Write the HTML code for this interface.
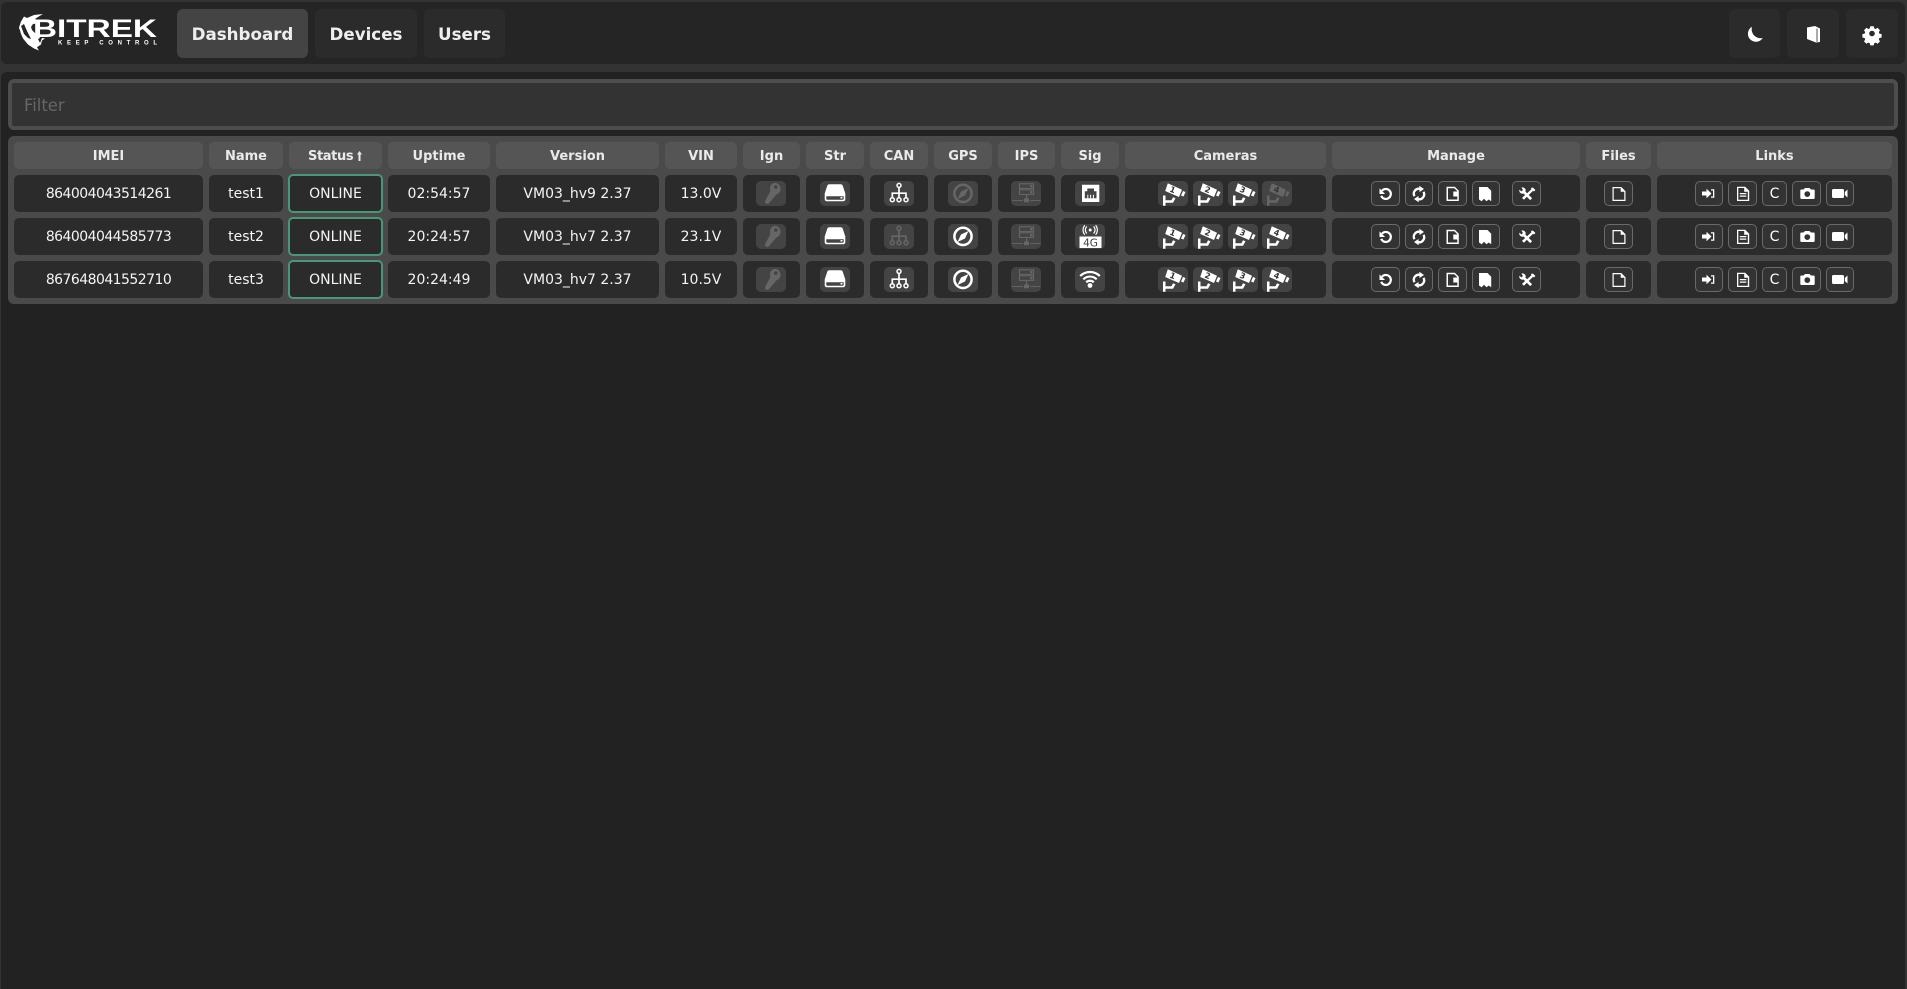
<!DOCTYPE html>
<html lang="en"><head><meta charset="utf-8"><title>Bitrek Dashboard</title>
<style>
*{box-sizing:border-box}
html,body{margin:0;padding:0;width:1907px;height:989px;overflow:hidden;background:#333;font-family:"DejaVu Sans","Liberation Sans",sans-serif;color:#eee}
#nav{position:absolute;left:1px;top:2px;width:1904px;height:62px;background:#252525;border-radius:6px}
#main{position:absolute;left:1px;top:72px;width:1904px;height:917px;background:#222;border-radius:6px 6px 0 0}
.n{position:absolute;top:9px;height:49px;background:#2b2b2b;border-radius:6px;font-weight:700;font-size:16.7px;line-height:50px;text-align:center;color:#eee}
.n.a{background:#444}
.n svg{position:absolute;left:0;top:0}
#filter{position:absolute;left:8px;top:79px;width:1890px;height:51px;border:4px solid #4d4d4d;border-radius:6px;background:#333;color:#666;font-size:16.4px;line-height:45px;padding-left:12px}
#tb{position:absolute;left:8px;top:136px;width:1890px;height:168px;background:#4a4a4a;border-radius:6px}
.row{position:absolute;left:0;width:1907px}
.h{top:142px;height:27px}.r1{top:175px;height:37px}.r2{top:218px;height:37px}.r3{top:261px;height:37px}
.c{position:absolute;top:0;height:100%;background:#2b2b2b;border-radius:5px;text-align:center;font-size:14px;line-height:39px;color:#f4f4f4}
.h .c{background:#555;font-weight:700;font-size:13px;line-height:29px;color:#eaeaea}
.c1{left:14px;width:189px}.c2{left:209px;width:74px}.c3{left:289px;width:93px}.c4{left:388px;width:102px}
.c5{left:496px;width:163px}.c6{left:665px;width:72px}.c7{left:743px;width:57px}.c8{left:806px;width:58px}
.c9{left:870px;width:58px}.c10{left:934px;width:58px}.c11{left:998px;width:57px}.c12{left:1061px;width:58px}
.c13{left:1125px;width:201px}.c14{left:1332px;width:248px}.c15{left:1586px;width:65px}.c16{left:1657px;width:235px}
.r1 .c1,.r2 .c1,.r3 .c1{letter-spacing:-.55px}
.st{top:-1px!important;height:39px!important;border:2px solid #4a9678;line-height:37px!important}
.st.c3{left:288px;width:95px}
.h .c3{text-align:left;padding-left:19px;letter-spacing:-.4px}
.h .c3 svg{position:absolute;left:68px;top:9px}
.b,.o{position:absolute;top:6px;height:25px;width:30px;border-radius:5px;display:flex;align-items:center;justify-content:center;color:#fff}
.b{background:#444}
.o{background:#333;border:1px solid #6a6a6a;font-size:14px;line-height:23px}
.t{padding-top:2px}
.d{color:#666}
.b svg,.o svg{flex:none;width:30px;height:25px;display:block}
svg{fill:currentColor}
.cam{font:700 8px "DejaVu Sans",sans-serif;fill:#333;text-anchor:middle}
</style></head><body>
<svg width="0" height="0" style="position:absolute">
<defs>
<symbol id="key" viewBox="0 0 30 25"><path fill-rule="evenodd" d="M18.500 1.700a6 6 0 0 1 2 11.700l-7.300 8.500a2.300 2.300 0 0 1-4-2.200l5.300-9.700A6 6 0 0 1 18.500 1.700zm1.300 2.600a1.800 1.800 0 1 0 0 3.600 1.800 1.800 0 0 0 0-3.600z"/></symbol>
<symbol id="drv" viewBox="0 0 30 25"><path fill-rule="evenodd" d="M9.500 3.300h11c1.200 0 1.900.6 2.300 1.600L25.300 12.500V18c0 1.400-.8 2.300-2.200 2.300H6.900C5.500 20.300 4.700 19.400 4.700 18v-5.500L7.200 4.900C7.600 3.900 8.300 3.300 9.500 3.300zM6.300 15.200v2.600c0 .6.300.9.900.9h15.600c.6 0 .9-.3.900-.9v-2.600zM20.500 16h2v1.500h-2z"/></symbol>
<symbol id="can" viewBox="0 0 30 25"><g fill="none" stroke="currentColor" stroke-width="1.500"><circle cx="15" cy="4.400" r="2"/><circle cx="8.300" cy="18.700" r="2"/><circle cx="15" cy="18.700" r="2"/><circle cx="22" cy="18.700" r="2"/><path stroke-width="1.700" d="M15 6.400V16.700M8.300 16.700V12.200H22V16.700"/></g></symbol>
<symbol id="gps" viewBox="0 0 30 25"><circle cx="15" cy="12.400" r="8.600" fill="none" stroke="currentColor" stroke-width="2.500"/><path d="M20.500 7 17 14.500 9.500 18 13 10.500z"/></symbol>
<symbol id="ips" viewBox="0 0 30 25"><g fill="none" stroke="currentColor" stroke-width="1.100"><rect x="8.500" y="2.800" width="14" height="4.600"/><rect x="8.500" y="8.800" width="14" height="4.600"/></g><path d="M19 4h2.400v2.200H19zM19 10h2.400v2.200H19zM15 14h1.200v3.500H18v3.800h-5v-3.800h2zM1 19h11v.9H1zM19 19h10.500v.9H19z"/></symbol>
<symbol id="eth" viewBox="0 0 30 25"><path fill-rule="evenodd" d="M7 3.700h17.300V21H7zM12.300 7.500v2.700H9.800v7h11.700v-7H19V7.500z"/><path d="M12.300 13.700h1v3.500h-1zM15.100 13.700h1v3.500h-1zM17.900 13.700h1v3.500h-1z"/></symbol>
<symbol id="lte" viewBox="0 0 30 25"><circle cx="15.200" cy="6" r="1.500"/><path fill="none" stroke="currentColor" stroke-width="1.200" d="M11.800 2.500a5 5 0 0 0 0 7M18.600 2.500a5 5 0 0 1 0 7M9.800 1.200a7.500 7.500 0 0 0 0 9.600M20.600 1.200a7.500 7.500 0 0 1 0 9.600"/><path d="M4.500 12.500h22v11.500h-22z"/><text x="15.500" y="22.500" text-anchor="middle" style="font:400 10.500px 'DejaVu Sans',sans-serif;fill:#444">4G</text></symbol>
<symbol id="wifi" viewBox="0 0 30 25"><circle cx="15" cy="18.500" r="2.400"/><path fill="none" stroke="currentColor" stroke-width="2.200" d="M5.200 9a14 14 0 0 1 19.600 0M8.300 12.300a9.600 9.600 0 0 1 13.400 0M11.200 15.300a5.500 5.500 0 0 1 7.600 0"/></symbol>
<symbol id="cam0" viewBox="0 0 30 25"><path d="M9.800 2.300 24 8.700 21 16 7.200 10zM25 10l2.500 1-2 4.500-2.500-1zM5 14.500h2.500v4.700h6l1.500-3 2.500 1-2.500 4.500H7.500v3H5z"/></symbol>
<symbol id="undo" viewBox="0 0 30 25"><path fill="none" stroke="currentColor" stroke-width="2.200" d="M11 9.700A5 5 0 1 1 10.200 14.800"/><path d="M8.500 7.400v5.600h5.600z"/></symbol>
<symbol id="sync" viewBox="0 0 30 25"><path fill="none" stroke="currentColor" stroke-width="2.300" d="M10.500 15.200A5 5 0 0 1 16.500 8M19.500 10.800A5 5 0 0 1 13.500 18"/><path d="M15.300 4.800l4.700 3.200-4.500 3zM14.700 21.200 10 18l4.500-3z"/></symbol>
<symbol id="save" viewBox="0 0 30 25"><path fill-rule="evenodd" d="M8.500 5.700h8.300l4 4V20H8.500zM10 7.200v11.300h9.300v-3h-4v-5h4v-.2l-3-3z"/><path d="M16.500 11.500h3v3h-3z"/></symbol>
<symbol id="mark" viewBox="0 0 30 25"><path d="M8 6h8.500l3.700 3.700V20.200l-2.500-1.700-2.200 1.700-2.500-2.500-2.300 2.500-2.700-1.700z"/></symbol>
<symbol id="tool" viewBox="0 0 30 25"><g transform="translate(.8 .7) scale(.95)"><path d="M19.200 6.500l2-.3 2.600 2.600-1.500 1.500-1-.8-9.600 9.500-2-2L19.500 8.100zM9 6.200a3.300 3.300 0 0 1 4.300 4.200l7 7-2 2-7-7A3.300 3.300 0 0 1 7 8.300l2 2 1.700-1.700-1.700-2.400z"/></g></symbol>
<symbol id="file" viewBox="0 0 30 25"><path fill-rule="evenodd" d="M8.500 6h8.800l4.200 4.200V20H8.500zM9.700 7.200v11.600h10.600v-8h-3.600V7.200z"/></symbol>
<symbol id="sign" viewBox="0 0 30 25"><path d="M8 10.500h4.500V7.800l5 4.700-5 4.700v-2.700H8zM17 8.200h3.300v8.600H17v-1.300h2V9.500h-2z"/></symbol>
<symbol id="text" viewBox="0 0 30 25"><path fill-rule="evenodd" d="M9 5.700h8.200l4 4V20H9zM10.300 7v11.700h9.500v-8h-3.600V7zM11.800 12h6.500v1.300h-6.500zM11.800 14.500h6.500v1.300h-6.500z"/></symbol>
<symbol id="ph" viewBox="0 0 30 25"><path fill-rule="evenodd" d="M9.500 8.500h2L13 7h4.500L19 8.500h2.500c.8 0 1.200.4 1.200 1.200v7.100c0 .8-.4 1.200-1.200 1.200h-12c-.8 0-1.200-.4-1.200-1.200V9.700c0-.8.400-1.200 1.200-1.200zM15.300 10.200a2.900 2.900 0 1 0 0 5.800 2.900 2.900 0 0 0 0-5.800z"/></symbol>
<symbol id="vid" viewBox="0 0 30 25"><path d="M8.500 8h9c1 0 1.500.5 1.500 1.500v6c0 1-.5 1.500-1.500 1.500h-9c-1 0-1.500-.5-1.500-1.500v-6C7 8.500 7.500 8 8.500 8zM19.800 11l2.700-2.500v8l-2.700-2.500z"/></symbol>
</defs></svg>

<div id="nav"></div>
<div id="main"></div>

<svg style="position:absolute;left:0;top:0" width="170" height="60" viewBox="0 0 170 60">
<path fill="#fff" d="M27 18l7-3 9-1-5 3-3 2 3 1.500-1 3-4 .5-2 3 1 3 3 3 4 3 1 2-2 1 2 4 2-5 3 .5-3 2-1 4-3 2-1 1 2 3-5-2-6-4-5-6-3-7-1-4 2-6 3-5z"/>
<path fill="#252525" d="M21 26l3-2 3 7 4 8-3-1-4-4zM18 29l2 1 1 5-2-1z"/>
<text x="33" y="37" textLength="124" lengthAdjust="spacingAndGlyphs" style="font:700 24.700px 'Liberation Sans',sans-serif;fill:#fff">BITREK</text>
<text x="58" y="44.300" textLength="99" style="font:700 6px 'Liberation Sans',sans-serif;fill:#fff">KEEP CONTROL</text>
</svg>

<div class="n a" style="left:177px;width:131px">Dashboard</div>
<div class="n" style="left:315px;width:102px">Devices</div>
<div class="n" style="left:424px;width:81px">Users</div>
<div class="n" style="left:1729px;width:51px"><svg width="51" height="49" viewBox="0 0 51 49"><path fill="#fff" d="M23 17.800A8 8 0 1 0 33.700 29 9 9 0 0 1 23 17.800z"/></svg></div>
<div class="n" style="left:1787px;width:52px"><svg width="52" height="49" viewBox="0 0 52 49"><path fill="#fff" d="M20 18.500l8-1.500 5 2.500V33l-4 .5-9-3.500z"/><path fill="#555" d="M29.500 19.800l1-.3v13.200l-1 .2z"/></svg></div>
<div class="n" style="left:1846px;width:52px"><svg width="52" height="49" viewBox="0 0 52 49"><path fill="#fff" fill-rule="evenodd" d="M24.300 17.300h3.400l.5 2.200 1.500.6 1.900-1.200 2.400 2.400-1.200 1.900.6 1.500 2.200.5v3.400l-2.200.5-.6 1.500 1.200 1.900-2.400 2.400-1.900-1.200-1.500.6-.5 2.200h-3.400l-.5-2.200-1.500-.6-1.900 1.200-2.400-2.400 1.200-1.900-.6-1.500-2.200-.5v-3.400l2.200-.5.6-1.500-1.200-1.900 2.400-2.400 1.900 1.200 1.500-.6zM26 21.800a2.800 2.800 0 1 0 0 5.600 2.800 2.800 0 0 0 0-5.600z" transform="translate(0 -.1)"/></svg></div>

<div id="filter">Filter</div>
<div id="tb"></div>

<div class="row h">
<div class="c c1">IMEI</div><div class="c c2">Name</div><div class="c c3">Status<svg width="5" height="10" viewBox="0 0 5 10"><path fill="#eaeaea" d="M2.500 0 5 3.500H3.500V10h-2V3.500H0z"/></svg></div><div class="c c4">Uptime</div><div class="c c5">Version</div><div class="c c6">VIN</div><div class="c c7">Ign</div><div class="c c8">Str</div><div class="c c9">CAN</div><div class="c c10">GPS</div><div class="c c11">IPS</div><div class="c c12">Sig</div><div class="c c13">Cameras</div><div class="c c14">Manage</div><div class="c c15">Files</div><div class="c c16">Links</div>
</div>

<div class="row r1">
<div class="c c1">864004043514261</div><div class="c c2">test1</div><div class="c c3 st">ONLINE</div><div class="c c4">02:54:57</div><div class="c c5">VM03_hv9 2.37</div><div class="c c6">13.0V</div><div class="c c7"></div><div class="c c8"></div><div class="c c9"></div><div class="c c10"></div><div class="c c11"></div><div class="c c12"></div><div class="c c13"></div><div class="c c14"></div><div class="c c15"></div><div class="c c16"></div>
<div class="b d" style="left:756px"><svg><use href="#key"/></svg></div>
<div class="b" style="left:820px"><svg><use href="#drv"/></svg></div>
<div class="b" style="left:884px"><svg><use href="#can"/></svg></div>
<div class="b d" style="left:948px"><svg><use href="#gps"/></svg></div>
<div class="b d" style="left:1011px"><svg><use href="#ips"/></svg></div>
<div class="b" style="left:1075px"><svg><use href="#eth"/></svg></div>
<div class="b" style="left:1158px"><svg viewBox="0 0 30 25"><use href="#cam0"/><text class="cam" x="14.500" y="11.500" transform="rotate(22 14.500 9)">1</text></svg></div>
<div class="b" style="left:1193px"><svg viewBox="0 0 30 25"><use href="#cam0"/><text class="cam" x="14.500" y="11.500" transform="rotate(22 14.500 9)">2</text></svg></div>
<div class="b" style="left:1228px"><svg viewBox="0 0 30 25"><use href="#cam0"/><text class="cam" x="14.500" y="11.500" transform="rotate(22 14.500 9)">3</text></svg></div>
<div class="b d" style="left:1262px"><svg viewBox="0 0 30 25"><use href="#cam0"/><text class="cam" x="14.500" y="11.500" transform="rotate(22 14.500 9)">4</text></svg></div>
<div class="o" style="left:1371px;width:29px"><svg><use href="#undo"/></svg></div>
<div class="o" style="left:1405px;width:28px"><svg><use href="#sync"/></svg></div>
<div class="o" style="left:1438px;width:29px"><svg><use href="#save"/></svg></div>
<div class="o" style="left:1472px;width:28px"><svg><use href="#mark"/></svg></div>
<div class="o" style="left:1512px;width:29px"><svg><use href="#tool"/></svg></div>
<div class="o" style="left:1604px;width:29px"><svg><use href="#file"/></svg></div>
<div class="o" style="left:1695px;width:28px"><svg><use href="#sign"/></svg></div>
<div class="o" style="left:1728px;width:29px"><svg><use href="#text"/></svg></div>
<div class="o t" style="left:1762px;width:25px">C</div>
<div class="o" style="left:1792px;width:29px"><svg><use href="#ph"/></svg></div>
<div class="o" style="left:1826px;width:28px"><svg><use href="#vid"/></svg></div>
</div>

<div class="row r2">
<div class="c c1">864004044585773</div><div class="c c2">test2</div><div class="c c3 st">ONLINE</div><div class="c c4">20:24:57</div><div class="c c5">VM03_hv7 2.37</div><div class="c c6">23.1V</div><div class="c c7"></div><div class="c c8"></div><div class="c c9"></div><div class="c c10"></div><div class="c c11"></div><div class="c c12"></div><div class="c c13"></div><div class="c c14"></div><div class="c c15"></div><div class="c c16"></div>
<div class="b d" style="left:756px"><svg><use href="#key"/></svg></div>
<div class="b" style="left:820px"><svg><use href="#drv"/></svg></div>
<div class="b d" style="left:884px"><svg><use href="#can"/></svg></div>
<div class="b" style="left:948px"><svg><use href="#gps"/></svg></div>
<div class="b d" style="left:1011px"><svg><use href="#ips"/></svg></div>
<div class="b" style="left:1075px"><svg><use href="#lte"/></svg></div>
<div class="b" style="left:1158px"><svg viewBox="0 0 30 25"><use href="#cam0"/><text class="cam" x="14.500" y="11.500" transform="rotate(22 14.500 9)">1</text></svg></div>
<div class="b" style="left:1193px"><svg viewBox="0 0 30 25"><use href="#cam0"/><text class="cam" x="14.500" y="11.500" transform="rotate(22 14.500 9)">2</text></svg></div>
<div class="b" style="left:1228px"><svg viewBox="0 0 30 25"><use href="#cam0"/><text class="cam" x="14.500" y="11.500" transform="rotate(22 14.500 9)">3</text></svg></div>
<div class="b" style="left:1262px"><svg viewBox="0 0 30 25"><use href="#cam0"/><text class="cam" x="14.500" y="11.500" transform="rotate(22 14.500 9)">4</text></svg></div>
<div class="o" style="left:1371px;width:29px"><svg><use href="#undo"/></svg></div>
<div class="o" style="left:1405px;width:28px"><svg><use href="#sync"/></svg></div>
<div class="o" style="left:1438px;width:29px"><svg><use href="#save"/></svg></div>
<div class="o" style="left:1472px;width:28px"><svg><use href="#mark"/></svg></div>
<div class="o" style="left:1512px;width:29px"><svg><use href="#tool"/></svg></div>
<div class="o" style="left:1604px;width:29px"><svg><use href="#file"/></svg></div>
<div class="o" style="left:1695px;width:28px"><svg><use href="#sign"/></svg></div>
<div class="o" style="left:1728px;width:29px"><svg><use href="#text"/></svg></div>
<div class="o t" style="left:1762px;width:25px">C</div>
<div class="o" style="left:1792px;width:29px"><svg><use href="#ph"/></svg></div>
<div class="o" style="left:1826px;width:28px"><svg><use href="#vid"/></svg></div>
</div>

<div class="row r3">
<div class="c c1">867648041552710</div><div class="c c2">test3</div><div class="c c3 st">ONLINE</div><div class="c c4">20:24:49</div><div class="c c5">VM03_hv7 2.37</div><div class="c c6">10.5V</div><div class="c c7"></div><div class="c c8"></div><div class="c c9"></div><div class="c c10"></div><div class="c c11"></div><div class="c c12"></div><div class="c c13"></div><div class="c c14"></div><div class="c c15"></div><div class="c c16"></div>
<div class="b d" style="left:756px"><svg><use href="#key"/></svg></div>
<div class="b" style="left:820px"><svg><use href="#drv"/></svg></div>
<div class="b" style="left:884px"><svg><use href="#can"/></svg></div>
<div class="b" style="left:948px"><svg><use href="#gps"/></svg></div>
<div class="b d" style="left:1011px"><svg><use href="#ips"/></svg></div>
<div class="b" style="left:1075px"><svg><use href="#wifi"/></svg></div>
<div class="b" style="left:1158px"><svg viewBox="0 0 30 25"><use href="#cam0"/><text class="cam" x="14.500" y="11.500" transform="rotate(22 14.500 9)">1</text></svg></div>
<div class="b" style="left:1193px"><svg viewBox="0 0 30 25"><use href="#cam0"/><text class="cam" x="14.500" y="11.500" transform="rotate(22 14.500 9)">2</text></svg></div>
<div class="b" style="left:1228px"><svg viewBox="0 0 30 25"><use href="#cam0"/><text class="cam" x="14.500" y="11.500" transform="rotate(22 14.500 9)">3</text></svg></div>
<div class="b" style="left:1262px"><svg viewBox="0 0 30 25"><use href="#cam0"/><text class="cam" x="14.500" y="11.500" transform="rotate(22 14.500 9)">4</text></svg></div>
<div class="o" style="left:1371px;width:29px"><svg><use href="#undo"/></svg></div>
<div class="o" style="left:1405px;width:28px"><svg><use href="#sync"/></svg></div>
<div class="o" style="left:1438px;width:29px"><svg><use href="#save"/></svg></div>
<div class="o" style="left:1472px;width:28px"><svg><use href="#mark"/></svg></div>
<div class="o" style="left:1512px;width:29px"><svg><use href="#tool"/></svg></div>
<div class="o" style="left:1604px;width:29px"><svg><use href="#file"/></svg></div>
<div class="o" style="left:1695px;width:28px"><svg><use href="#sign"/></svg></div>
<div class="o" style="left:1728px;width:29px"><svg><use href="#text"/></svg></div>
<div class="o t" style="left:1762px;width:25px">C</div>
<div class="o" style="left:1792px;width:29px"><svg><use href="#ph"/></svg></div>
<div class="o" style="left:1826px;width:28px"><svg><use href="#vid"/></svg></div>
</div>
</body></html>
